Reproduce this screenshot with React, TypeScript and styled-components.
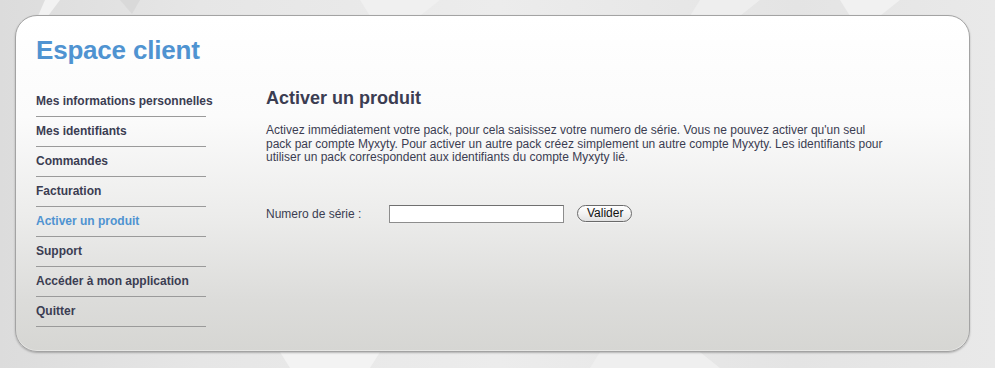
import React from 'react';
import styled, { createGlobalStyle } from 'styled-components';

const GlobalStyle = createGlobalStyle`
  html, body {
    margin: 0;
    padding: 0;
    height: 100%;
  }
  body {
    font-family: "Liberation Sans", Arial, sans-serif;
    background: linear-gradient(90deg, #dcdcdc 0%, #e6e6e6 20%, #ececec 50%, #e4e4e4 80%, #e9e9e9 100%);
  }
`;

const Page = styled.div`
  position: relative;
  width: 995px;
  height: 368px;
  padding: 15px 25px 0 15px;
  box-sizing: border-box;
  overflow: hidden;
`;

const Backdrop = styled.svg`
  position: absolute;
  left: 0;
  top: 0;
  pointer-events: none;
`;

const Panel = styled.div`
  position: relative;
  height: 337px;
  box-sizing: border-box;
  border: 1px solid #a3a3a3;
  border-radius: 22px;
  background: linear-gradient(180deg, #ffffff 0%, #fbfbfb 30%, #ececeb 60%, #dcdcda 85%, #d6d6d3 100%);
  box-shadow: 0 1px 2px rgba(0, 0, 0, 0.25), inset 0 -1px 0 rgba(255, 255, 255, 0.4);
  padding: 20px 20px 0 20px;
`;

const Title = styled.h1`
  margin: 0;
  font-size: 26px;
  line-height: 28px;
  font-weight: bold;
  color: #4f93d1;
  letter-spacing: -0.2px;
`;

const Body = styled.div`
  display: flex;
  margin-top: 30px;
`;

const Menu = styled.ul`
  list-style: none;
  margin: 0;
  padding: 0;
  width: 170px;
  flex-shrink: 0;
`;

const MenuItem = styled.li<{ active?: boolean; first?: boolean }>`
  height: 29px;
  line-height: 29px;
  border-bottom: 1px solid #9a9a9a;
  font-size: 12px;
  font-weight: bold;
  color: ${props => (props.active ? '#4f93d1' : '#3b3d52')};
  white-space: nowrap;
  margin-top: ${props => (props.first ? '-7px' : '0')};
`;

const Content = styled.div`
  margin-left: 60px;
  width: 640px;
`;

const Heading = styled.h2`
  margin: -8px 0 0 0;
  font-size: 18px;
  line-height: 24px;
  font-weight: bold;
  color: #3b3d52;
`;

const Text = styled.p`
  margin: 14px 0 0 0;
  font-size: 12px;
  line-height: 13.5px;
  color: #3b3d52;
`;

const FormRow = styled.div`
  display: flex;
  align-items: center;
  margin-top: 40px;
`;

const Label = styled.label`
  width: 123px;
  font-size: 12px;
  color: #3b3d52;
`;

const Input = styled.input`
  width: 175px;
  height: 18px;
  box-sizing: border-box;
  border: 1px solid #8d8d8d;
  border-top-color: #6f6f6f;
  background: #fff;
  margin: 0;
  padding: 0 3px;
  font-family: inherit;
  font-size: 11px;
`;

const Button = styled.button`
  margin-left: 13px;
  height: 17px;
  padding: 0 8px 0 9px;
  border: 1px solid #6a6a6a;
  border-radius: 9px;
  background: linear-gradient(180deg, #ffffff 0%, #f3f3f3 50%, #e2e2e2 100%);
  font-family: "Liberation Sans", Arial, sans-serif;
  font-size: 12px;
  line-height: 15px;
  color: #111;
  box-shadow: 0 1px 0 rgba(255, 255, 255, 0.6);
`;

const menu = [
  'Mes informations personnelles',
  'Mes identifiants',
  'Commandes',
  'Facturation',
  'Activer un produit',
  'Support',
  'Accéder à mon application',
  'Quitter',
];

const App: React.FC = () => (
  <>
    <GlobalStyle />
    <Page>
      <Backdrop width="995" height="368" viewBox="0 0 995 368">
        <polygon points="45,0 60,0 48,16 38,16" fill="#f2f2f2" />
        <polygon points="120,0 140,0 132,14" fill="#d9d9d9" />
        <polygon points="360,0 440,0 420,16 370,16" fill="#f0f0f0" />
        <polygon points="700,0 760,0 740,16 690,16" fill="#eeeeee" />
        <polygon points="840,0 900,0 880,16 850,16" fill="#f1f1f1" />
        <polygon points="280,352 380,352 370,368 290,368" fill="#f3f3f3" />
        <polygon points="600,352 700,352 720,368 590,368" fill="#efefef" />
      </Backdrop>
      <Panel>
        <Title>Espace client</Title>
        <Body>
          <Menu>
            {menu.map((item, i) => (
              <MenuItem key={item} active={item === 'Activer un produit'} first={i === 0}>
                {item}
              </MenuItem>
            ))}
          </Menu>
          <Content>
            <Heading>Activer un produit</Heading>
            <Text>
              Activez immédiatement votre pack, pour cela saisissez votre numero de série. Vous ne pouvez activer qu'un seul
              <br />
              pack par compte Myxyty. Pour activer un autre pack créez simplement un autre compte Myxyty. Les identifiants pour
              <br />
              utiliser un pack correspondent aux identifiants du compte Myxyty lié.
            </Text>
            <FormRow>
              <Label>Numero de série :</Label>
              <Input type="text" />
              <Button type="button">Valider</Button>
            </FormRow>
          </Content>
        </Body>
      </Panel>
    </Page>
  </>
);

export default App;
